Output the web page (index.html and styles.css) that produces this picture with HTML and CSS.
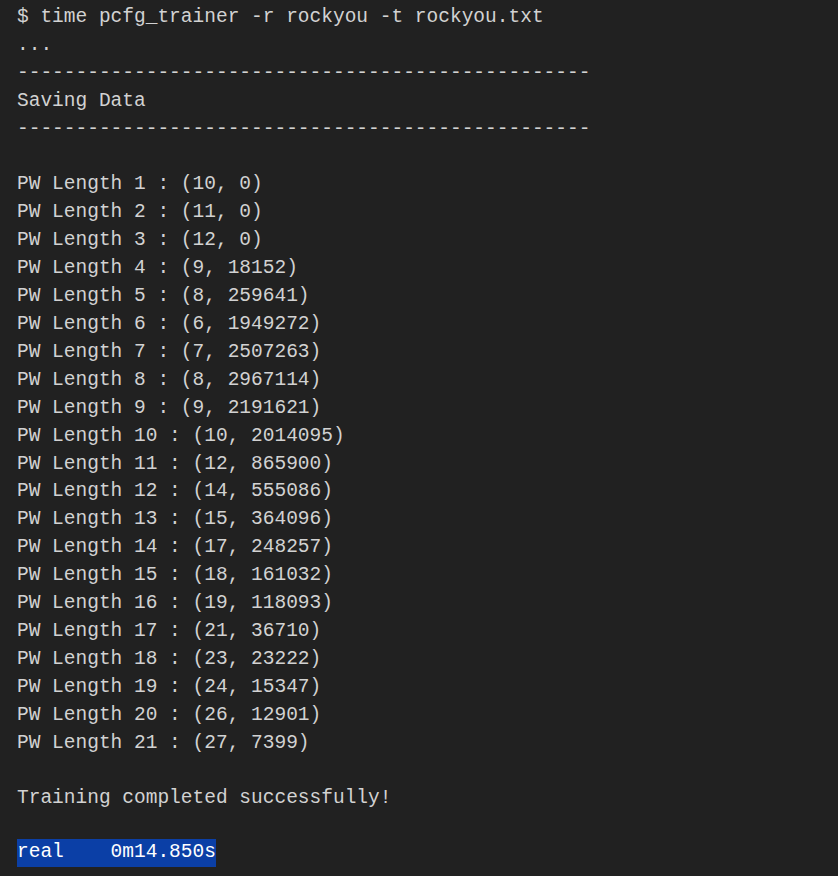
FILE: index.html
```html
<!DOCTYPE html>
<html>
<head>
<meta charset="utf-8">
<link rel="stylesheet" href="styles.css">
</head>
<body>
<pre class="term">$ time pcfg_trainer -r rockyou -t rockyou.txt
...
-------------------------------------------------
Saving Data
-------------------------------------------------

PW Length 1 : (10, 0)
PW Length 2 : (11, 0)
PW Length 3 : (12, 0)
PW Length 4 : (9, 18152)
PW Length 5 : (8, 259641)
PW Length 6 : (6, 1949272)
PW Length 7 : (7, 2507263)
PW Length 8 : (8, 2967114)
PW Length 9 : (9, 2191621)
PW Length 10 : (10, 2014095)
PW Length 11 : (12, 865900)
PW Length 12 : (14, 555086)
PW Length 13 : (15, 364096)
PW Length 14 : (17, 248257)
PW Length 15 : (18, 161032)
PW Length 16 : (19, 118093)
PW Length 17 : (21, 36710)
PW Length 18 : (23, 23222)
PW Length 19 : (24, 15347)
PW Length 20 : (26, 12901)
PW Length 21 : (27, 7399)

Training completed successfully!

<span class="sel">real    0m14.850s</span></pre>
</body>
</html>
```
FILE: styles.css
```css
html, body {
  margin: 0;
  padding: 0;
  background: #212121;
  height: 100%;
}
.term {
  margin: 0;
  padding: 4px 17px 0 17px;
  font-family: "Liberation Mono", monospace;
  font-size: 19.5px;
  line-height: 27.9px;
  color: #d2d2d2;
  white-space: pre;
}
.sel {
  display: inline-block;
  background: #0b3fa6;
  color: #ffffff;
  height: 28px;
  vertical-align: top;
  margin-top: -2px;
}
```
